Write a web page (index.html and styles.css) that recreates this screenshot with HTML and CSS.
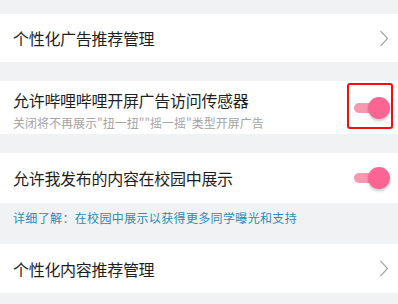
FILE: index.html
```html
<!DOCTYPE html>
<html lang="zh">
<head>
<meta charset="utf-8">
<link rel="stylesheet" href="styles.css">
</head>
<body>
<div class="page">
  <div class="row row-link first">
    <span class="title">个性化广告推荐管理</span>
    <svg class="chev" width="10" height="17" viewBox="0 0 10 17"><path d="M1.5 1 L8.5 8.5 L1.5 16" fill="none" stroke="#a3a3a3" stroke-width="1.1"/></svg>
  </div>
  <div class="row row-sub">
    <div class="texts">
      <span class="title">允许哔哩哔哩开屏广告访问传感器</span>
      <span class="sub">关闭将不再展示"扭一扭""摇一摇"类型开屏广告</span>
    </div>
    <div class="switch-wrap">
      <div class="switch"><span class="track"></span><span class="knob"></span></div>
      <span class="highlight"></span>
    </div>
  </div>
  <div class="row row-toggle">
    <span class="title">允许我发布的内容在校园中展示</span>
    <div class="switch"><span class="track"></span><span class="knob"></span></div>
  </div>
  <div class="note">详细了解：在校园中展示以获得更多同学曝光和支持</div>
  <div class="row row-link last">
    <span class="title">个性化内容推荐管理</span>
    <svg class="chev" width="10" height="17" viewBox="0 0 10 17"><path d="M1.5 1 L8.5 8.5 L1.5 16" fill="none" stroke="#a3a3a3" stroke-width="1.1"/></svg>
  </div>
</div>
</body>
</html>
```
FILE: styles.css
```css
html, body {
  margin: 0;
  padding: 0;
  background: #f1f2f4;
}
body {
  font-family: "Noto Sans CJK SC", "Noto Sans", sans-serif;
  color: #1f1f1f;
  width: 398px;
  height: 304px;
  overflow: hidden;
}
.page {
  display: flex;
  flex-direction: column;
  padding-top: 14px;
}
.row {
  background: #fff;
  display: flex;
  align-items: center;
  justify-content: space-between;
  padding: 0 8px 0 13px;
  box-sizing: border-box;
}
.title {
  font-size: 16px;
  line-height: 22px;
  letter-spacing: -0.3px;
}
.row-link {
  height: 48px;
  padding-right: 9px;
}
.row-link.last {
  height: 49px;
}
.row-sub {
  margin-top: 19px;
  height: 53px;
  padding-top: 8px;
  padding-bottom: 3px;
  align-items: flex-start;
}
.texts {
  display: flex;
  flex-direction: column;
  gap: 4px;
}
.sub {
  font-size: 12px;
  line-height: 16px;
  color: #a3a3a3;
}
.row-toggle {
  margin-top: 19px;
  height: 50px;
}
.note {
  height: 41px;
  padding: 7px 0 0 13px;
  box-sizing: border-box;
  font-size: 12px;
  line-height: 16px;
  letter-spacing: 0.35px;
  color: #2b8ab8;
}
.switch-wrap {
  position: relative;
  align-self: center;
  margin-top: -4px;
}
.switch {
  position: relative;
  width: 36px;
  height: 22px;
  flex: none;
}
.track {
  position: absolute;
  left: 0;
  top: 6px;
  width: 28px;
  height: 10px;
  border-radius: 5px;
  background: #f699b0;
}
.knob {
  position: absolute;
  right: 0;
  top: 0;
  width: 22px;
  height: 22px;
  border-radius: 50%;
  background: #fb6593;
  box-shadow: 0 2px 3px rgba(0, 0, 0, 0.22);
}
.highlight {
  position: absolute;
  left: -7px;
  top: -14px;
  width: 46px;
  height: 46px;
  border: 2px solid #f40d0d;
  border-radius: 3px;
  box-sizing: border-box;
}
.chev {
  display: block;
}
```
